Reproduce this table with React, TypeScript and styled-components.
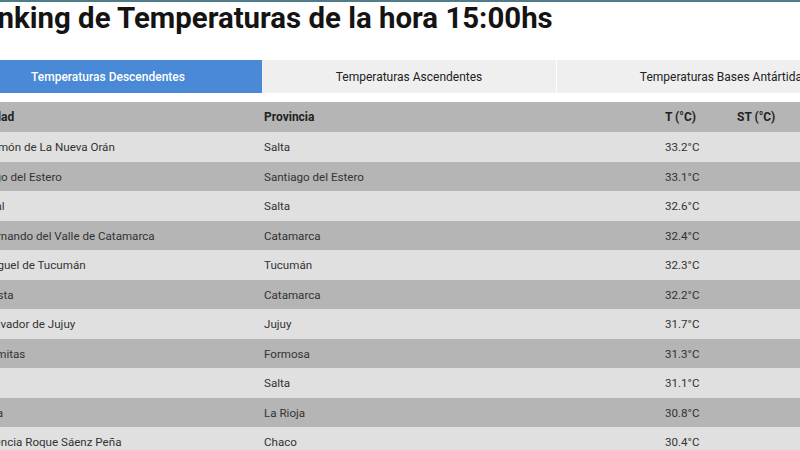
import styled, { createGlobalStyle } from 'styled-components'

const GlobalStyle = createGlobalStyle`
  html, body {
    margin: 0;
    padding: 0;
    background: #fff;
    overflow: hidden;
  }
  body {
    font-family: Roboto, "Liberation Sans", Arial, sans-serif;
  }
`

const tabs = ['Temperaturas Descendentes', 'Temperaturas Ascendentes', 'Temperaturas Bases Antártidas']

const rows = [
  ['San Ramón de La Nueva Orán', 'Salta', '33.2°C'],
  ['Santiago del Estero', 'Santiago del Estero', '33.1°C'],
  ['Tartagal', 'Salta', '32.6°C'],
  ['San Fernando del Valle de Catamarca', 'Catamarca', '32.4°C'],
  ['San Miguel de Tucumán', 'Tucumán', '32.3°C'],
  ['Tinogasta', 'Catamarca', '32.2°C'],
  ['San Salvador de Jujuy', 'Jujuy', '31.7°C'],
  ['Las Lomitas', 'Formosa', '31.3°C'],
  ['Metán', 'Salta', '31.1°C'],
  ['La Rioja', 'La Rioja', '30.8°C'],
  ['Presidencia Roque Sáenz Peña', 'Chaco', '30.4°C'],
]

export default function App() {
  return (
    <>
      <GlobalStyle />
      <TopLine />
      <Page>
        <Title>Ranking de Temperaturas de la hora 15:00hs</Title>
        <TabBar>
          {tabs.map((t, i) => (
            <Tab key={t} $active={i === 0} $width={[308, 294, 334][i]}>
              {t}
            </Tab>
          ))}
        </TabBar>
        <Table>
          <Row $dark $header>
            <Cell>Localidad</Cell>
            <Cell>Provincia</Cell>
            <Cell>T (°C)</Cell>
            <Cell>ST (°C)</Cell>
          </Row>
          {rows.map((r, i) => (
            <Row key={r[0]} $dark={i % 2 === 1}>
              <Cell>{r[0]}</Cell>
              <Cell>{r[1]}</Cell>
              <Cell>{r[2]}</Cell>
              <Cell />
            </Row>
          ))}
        </Table>
      </Page>
    </>
  )
}

const TopLine = styled.div`
  height: 2px;
  background: #4f7c88;
`

const Page = styled.div`
  margin-left: -46px;
  width: 1000px;
`

const Title = styled.h1`
  margin: 0;
  padding: 0 0 0 9px;
  font-size: 29.4px;
  line-height: 33px;
  font-weight: 700;
  color: #141414;
`

const TabBar = styled.div`
  display: flex;
  margin-top: 25px;
  height: 33px;
`

const Tab = styled.div<{ $active?: boolean; $width: number }>`
  flex: 0 0 ${(p) => p.$width}px;
  display: flex;
  align-items: center;
  justify-content: center;
  font-size: 12px;
  font-weight: ${(p) => (p.$active ? 500 : 400)};
  color: ${(p) => (p.$active ? '#fff' : '#222')};
  background: ${(p) => (p.$active ? '#4a89d5' : '#efefef')};
  & + & + & {
    margin-left: 1px;
  }
`

const Table = styled.div`
  margin-top: 9px;
`

const Row = styled.div<{ $dark?: boolean; $header?: boolean }>`
  display: grid;
  grid-template-columns: 302px 401px 72px 1fr;
  box-sizing: border-box;
  padding: ${(p) => (p.$header ? '0' : '2px')} 0 0 8px;
  height: ${(p) => (p.$header ? '30px' : '29.5px')};
  line-height: ${(p) => (p.$header ? '30px' : '27.5px')};
  background: ${(p) => (p.$dark ? '#b5b5b5' : '#e0e0e0')};
  font-size: ${(p) => (p.$header ? '12px' : '11.6px')};
  font-weight: ${(p) => (p.$header ? 700 : 400)};
  color: ${(p) => (p.$header ? '#222' : '#333')};
`

const Cell = styled.div`
  white-space: nowrap;
  overflow: hidden;
`
